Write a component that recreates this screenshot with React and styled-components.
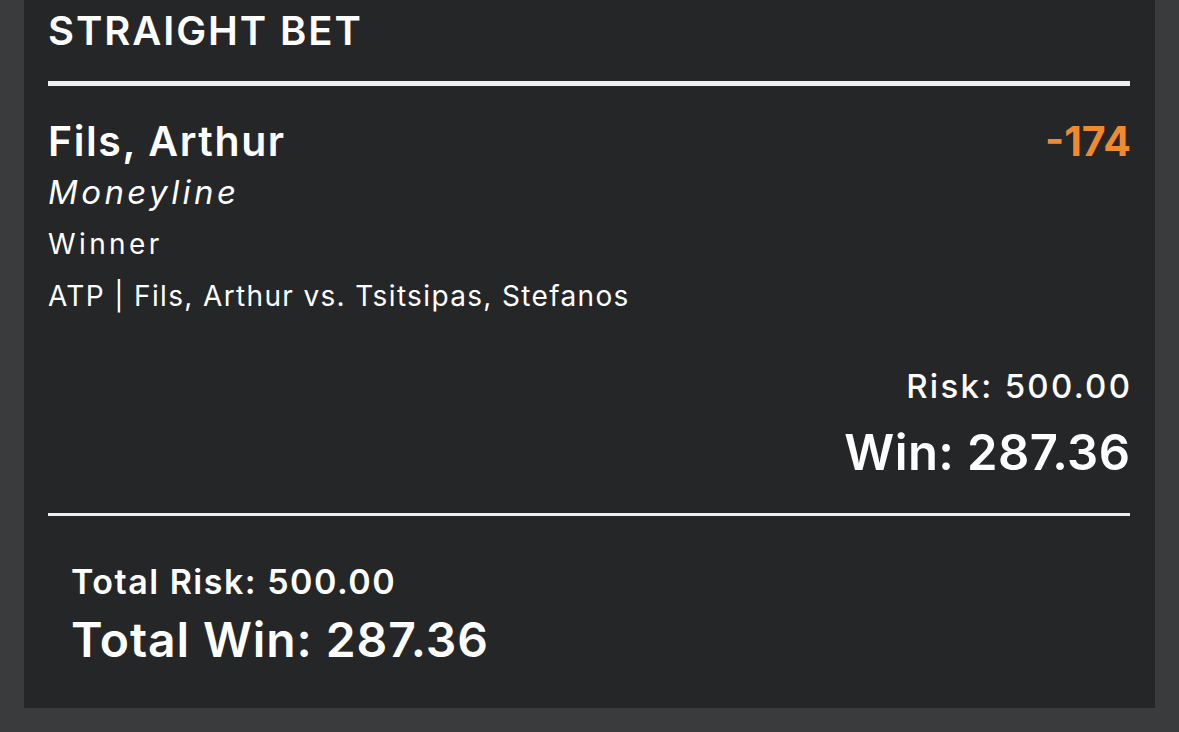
import React from 'react'
import styled, { createGlobalStyle } from 'styled-components'

const GlobalStyle = createGlobalStyle`
    html, body {
        margin: 0;
        padding: 0;
        background-color: #3a3b3d;
    }
    body {
        font-family: Inter, "Open Sans", sans-serif;
        color: #ffffff;
    }
`

const Page = styled.div`
    height: 732px;
    padding: 0 24px 24px 24px;
    box-sizing: border-box;
    display: flex;
`

const Panel = styled.div`
    flex: 1;
    background-color: #252628;
    padding: 0 25px 40px 24px;
    display: flex;
    flex-direction: column;
`

const Heading = styled.h2`
    margin: 0 0 20px 0;
    font-size: 40px;
    line-height: 61px;
    font-weight: 600;
    letter-spacing: 1.9px;
`

const Rule = styled.div`
    height: ${props => props.$thick}px;
    background-color: #efefef;
    margin-top: ${props => props.$top || 0}px;
`

const NameRow = styled.div`
    display: flex;
    justify-content: space-between;
    align-items: baseline;
    margin-top: 30px;
    font-size: 41px;
    line-height: 50px;
    font-weight: 600;
    letter-spacing: 1.6px;
`

const Odds = styled.span`
    color: #f08a2c;
    font-weight: 700;
    letter-spacing: 0;
    margin-right: -1px;
`

const Market = styled.div`
    font-size: 33px;
    line-height: 52px;
    font-style: italic;
    letter-spacing: 3.4px;
`

const Detail = styled.div`
    font-size: 28px;
    line-height: 52px;
    letter-spacing: ${props => props.$spacing}px;
`

const Amounts = styled.div`
    display: flex;
    flex-direction: column;
    align-items: flex-end;
    margin-top: 44px;
`

const Amount = styled.div`
    font-size: ${props => props.$size}px;
    line-height: ${props => props.$lh}px;
    font-weight: ${props => props.$weight};
    letter-spacing: ${props => props.$spacing}px;
    margin-top: ${props => props.$top || 0}px;
`

const RightAmount = styled(Amount)`
    margin-right: -${props => props.$spacing}px;
`

const Totals = styled.div`
    padding-left: 23px;
    margin-top: 44px;
`

export default function App() {
    return (
        <>
            <GlobalStyle />
            <Page>
                <Panel>
                    <Heading>STRAIGHT BET</Heading>
                    <Rule $thick={5} />
                    <NameRow>
                        <span>Fils, Arthur</span>
                        <Odds>-174</Odds>
                    </NameRow>
                    <Market>Moneyline</Market>
                    <Detail $spacing={3.4}>Winner</Detail>
                    <Detail $spacing={1.35}>ATP | Fils, Arthur vs. Tsitsipas, Stefanos</Detail>
                    <Amounts>
                        <RightAmount $size={33} $lh={40} $weight={500} $spacing={2.3}>Risk: 500.00</RightAmount>
                        <RightAmount $size={49} $lh={60} $weight={600} $spacing={0.4} $top={17}>Win: 287.36</RightAmount>
                    </Amounts>
                    <Rule $thick={3} $top={30} />
                    <Totals>
                        <Amount $size={34} $lh={44} $weight={600} $spacing={1.5}>Total Risk: 500.00</Amount>
                        <Amount $size={48} $lh={56} $weight={600} $spacing={0.9} $top={8}>Total Win: 287.36</Amount>
                    </Totals>
                </Panel>
            </Page>
        </>
    )
}
